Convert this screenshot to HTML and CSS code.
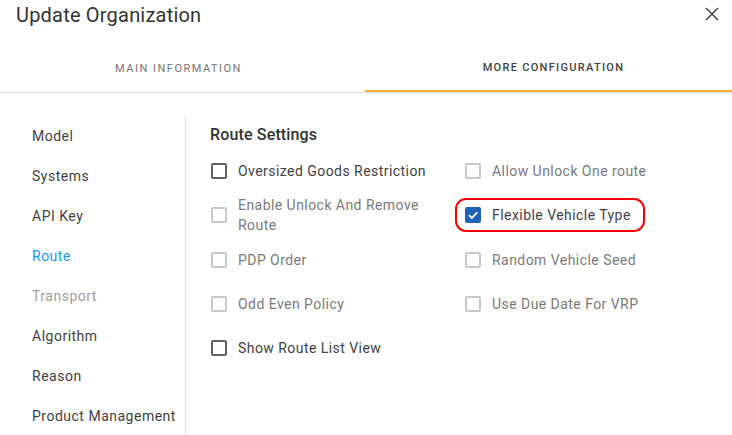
FILE: index.html
```html
<!DOCTYPE html>
<html>
<head>
<meta charset="utf-8">
<link rel="stylesheet" href="styles.css">
</head>
<body>
<div class="dialog">
  <header class="head">
    <h1 class="title">Update Organization</h1>
    <button class="close" aria-label="Close">
      <svg width="14" height="14" viewBox="0 0 14 14"><path d="M1 1L13 13M13 1L1 13" stroke="#4a4a4a" stroke-width="1.6" fill="none"/></svg>
    </button>
  </header>
  <nav class="tabs">
    <div class="tab tab-left">MAIN INFORMATION</div>
    <div class="tab tab-right active">MORE CONFIGURATION</div>
  </nav>
  <div class="body">
    <aside class="side">
      <div class="side-item">Model</div>
      <div class="side-item">Systems</div>
      <div class="side-item">API Key</div>
      <div class="side-item current">Route</div>
      <div class="side-item muted">Transport</div>
      <div class="side-item">Algorithm</div>
      <div class="side-item">Reason</div>
      <div class="side-item">Product Management</div>
    </aside>
    <main class="content">
      <h2 class="section">Route Settings</h2>
      <div class="grid">
        <label class="opt"><span class="box"></span><span class="lbl">Oversized Goods Restriction</span></label>
        <label class="opt disabled"><span class="box"></span><span class="lbl">Allow Unlock One route</span></label>
        <label class="opt disabled"><span class="box"></span><span class="lbl">Enable Unlock And Remove Route</span></label>
        <label class="opt highlight"><span class="box checked"><svg width="12" height="12" viewBox="0 0 12 12"><path d="M2 6.2L4.8 9L10.2 3.3" stroke="#fff" stroke-width="1.8" fill="none"/></svg></span><span class="lbl">Flexible Vehicle Type</span><span class="ring"></span></label>
        <label class="opt disabled"><span class="box"></span><span class="lbl">PDP Order</span></label>
        <label class="opt disabled"><span class="box"></span><span class="lbl">Random Vehicle Seed</span></label>
        <label class="opt disabled"><span class="box"></span><span class="lbl">Odd Even Policy</span></label>
        <label class="opt disabled"><span class="box"></span><span class="lbl">Use Due Date For VRP</span></label>
        <label class="opt"><span class="box"></span><span class="lbl">Show Route List View</span></label>
      </div>
    </main>
  </div>
</div>
</body>
</html>
```

FILE: styles.css
```css
* { box-sizing: border-box; }
html, body { margin: 0; padding: 0; background: #fff; }
body {
  font-family: Roboto, "Liberation Sans", Arial, sans-serif;
  color: #424242;
  width: 732px;
  height: 435px;
  overflow: hidden;
}
.head {
  height: 44px;
  display: flex;
  align-items: center;
  justify-content: space-between;
  padding: 0 12px 0 16px;
}
.title {
  margin: 0;
  font-size: 20px;
  font-weight: 400;
  color: #333;
  line-height: 28px;
  letter-spacing: 0.2px;
  position: relative;
  top: -7px;
}
.close {
  border: 0;
  background: none;
  padding: 0;
  width: 14px;
  height: 14px;
  display: flex;
  position: relative;
  top: -8px;
  left: -1px;
}
.tabs {
  display: flex;
  height: 49px;
  border-bottom: 1px solid #dedede;
}
.tab {
  flex: 1;
  display: flex;
  align-items: center;
  justify-content: center;
  font-size: 11px;
  letter-spacing: 1.5px;
  color: #757575;
  font-weight: 400;
}
.tab-left { padding-right: 8px; }
.tab-right { padding-left: 10px; }
.tab.active {
  color: #424242;
  border-bottom: 2px solid #ffae33;
  font-weight: 500;
  letter-spacing: 1.3px;
}
.body {
  display: flex;
}
.side {
  width: 186px;
  margin-top: 24px;
  border-right: 1px solid #e0e0e0;
  padding-left: 32px;
}
.side-item {
  height: 40px;
  display: flex;
  align-items: center;
  font-size: 14px;
  color: #424242;
  letter-spacing: 0.5px;
}
.side-item:first-child { margin-top: -1px; }
.side-item.current { color: #2196f3; }
.side-item.muted { color: #9e9e9e; }
.content {
  padding-left: 24px;
  padding-top: 32px;
}
.section {
  margin: 0;
  font-size: 16px;
  font-weight: 500;
  color: #333;
  line-height: 20px;
  letter-spacing: 0.15px;
}
.grid {
  display: grid;
  grid-template-columns: 230px 230px;
  column-gap: 24px;
  grid-auto-rows: 44.3px;
  margin-top: 4px;
}
.opt {
  display: flex;
  align-items: center;
  gap: 11px;
  font-size: 14px;
  line-height: 20px;
  color: #424242;
  position: relative;
  letter-spacing: 0.45px;
}
.opt.disabled { color: #7a7a7a; }
.box {
  flex: 0 0 16px;
  width: 16px;
  height: 16px;
  margin-left: 1px;
  border: 2px solid #616161;
  border-radius: 2px;
  display: flex;
  align-items: center;
  justify-content: center;
}
.opt.disabled .box { border-color: #c8c8c8; }
.box.checked {
  background: #1e63b5;
  border-color: #1e63b5;
}
.lbl { padding-right: 4px; }
.ring {
  position: absolute;
  left: -9px;
  top: 5px;
  width: 190px;
  height: 34px;
  border: 2.5px solid #f00000;
  border-radius: 11px;
  pointer-events: none;
}
```
